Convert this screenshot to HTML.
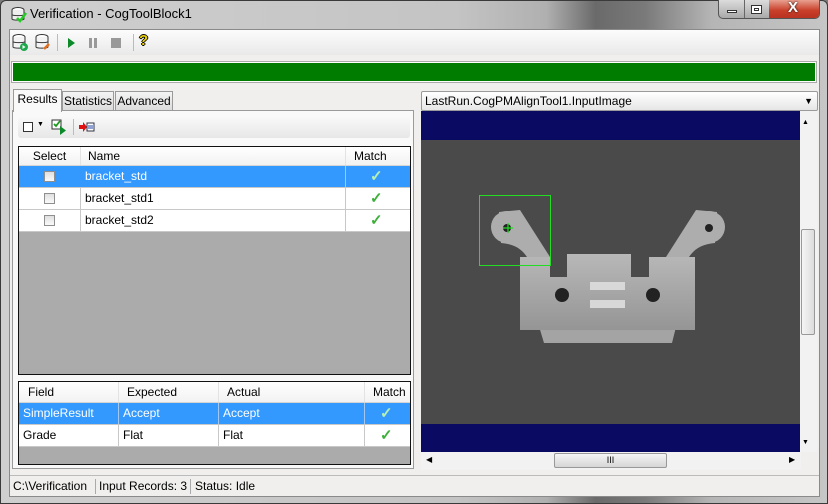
<!DOCTYPE html>
<html><head><meta charset="utf-8"><style>
*{margin:0;padding:0;box-sizing:border-box}
body{width:828px;height:504px;overflow:hidden;position:relative;font-family:"Liberation Sans",sans-serif;font-size:12px;color:#000;background:#7a7a7a}
.a{position:absolute}
.frame{left:0;top:0;width:828px;height:504px;background:linear-gradient(90deg,#cfcfcf 0%,#c4c4c4 55%,#b0b0b0 66%,#6a6a6a 72%,#7a7a7a 78%,#b5b5b5 86%,#c6c6c6 100%);border:1px solid #3a3a3a;border-radius:6px 6px 0 0}
.client{left:9px;top:29px;width:811px;height:468px;background:#f0efee;border:1px solid #8a8a8a}
.grid{background:#ababab;border:1px solid #111}
.hdr{background:linear-gradient(#fff,#f2f2f2);border-bottom:1px solid #d5d5d5;height:19px}
.cell{position:absolute;top:0;height:100%;border-right:1px solid #c8c8c8;padding-left:4px;line-height:21px;white-space:nowrap}
.row{position:absolute;left:0;right:0;height:22px;background:#fff;border-bottom:1px solid #c8c8c8}
.sel{background:#3399ff;color:#fff}
.cb{position:absolute;width:11px;height:11px;border:1px solid #8f8f8f;background:linear-gradient(#e0e0e0,#fafafa);top:5px}
.ck{color:#3cb039;font-weight:bold;font-size:15px;position:absolute;top:1px}
.tab{top:91px;height:20px;border:1px solid #9a9a9a;background:linear-gradient(#f4f4f4,#dcdcdc);line-height:18px;text-align:center}
</style></head><body>
<div class="a frame"></div>
<!-- title -->
<svg class="a" style="left:10px;top:6px" width="18" height="18"><ellipse cx="8" cy="4" rx="6" ry="2.5" fill="#fff" stroke="#333"/><path d="M2 4v9c0 1.5 12 1.5 12 0V4" fill="#eee" stroke="#333"/><path d="M2 8.5c0 1.5 12 1.5 12 0" fill="none" stroke="#333"/><path d="M7 12l3 3 6-8" stroke="#2c2" stroke-width="2.5" fill="none"/></svg>
<div class="a" style="left:30px;top:6px;font-size:13px;color:#000">Verification - CogToolBlock1</div>
<div class="a" style="left:718px;top:0;width:102px;height:19px;border:1px solid #555;border-top:none;border-radius:0 0 5px 5px;overflow:hidden;background:linear-gradient(#dcdcdc,#a9a9a9)">
 <div class="a" style="left:25px;top:0;width:1px;height:19px;background:#666"></div>
 <div class="a" style="left:50px;top:0;width:52px;height:19px;background:linear-gradient(#e8a090,#c8402a 55%,#b8301f)"></div>
 <div class="a" style="left:8px;top:10px;width:10px;height:3px;background:#fff;border:1px solid #333"></div>
 <div class="a" style="left:32px;top:5px;width:11px;height:9px;border:1px solid #333;background:#fff"><div style="margin:2px;height:3px;border:1px solid #333"></div></div>
 <div class="a" style="left:69px;top:-1px;color:#fff;font-weight:bold;font-size:15px;text-shadow:0 0 2px #000">X</div>
</div>
<div class="a client"></div>
<!-- toolbar -->
<div class="a" style="left:10px;top:30px;width:809px;height:25px;background:linear-gradient(#fcfcfc,#e9e9e9)"></div>
<svg class="a" style="left:12px;top:34px" width="60" height="18">
 <ellipse cx="7" cy="3" rx="6" ry="2.5" fill="#fff" stroke="#333"/><path d="M1 3v10c0 1.5 12 1.5 12 0V3" fill="#f3f3f3" stroke="#333"/><path d="M1 7.5c0 1.5 12 1.5 12 0" fill="none" stroke="#333"/><circle cx="12" cy="13" r="4" fill="#1da84a"/><path d="M10.5 11v4l3-2z" fill="#fff"/>
 <g transform="translate(23,0)"><ellipse cx="7" cy="3" rx="6" ry="2.5" fill="#fff" stroke="#333"/><path d="M1 3v10c0 1.5 12 1.5 12 0V3" fill="#f3f3f3" stroke="#333"/><path d="M1 7.5c0 1.5 12 1.5 12 0" fill="none" stroke="#333"/><path d="M9 15l5-5" stroke="#e07020" stroke-width="2.5"/></g>
</svg>
<div class="a" style="left:57px;top:34px;width:1px;height:17px;background:#bbb"></div>
<svg class="a" style="left:66px;top:37px" width="60" height="12"><path d="M2 1v10l7-5z" fill="#0c8a2a"/><rect x="23" y="1" width="3" height="10" fill="#999"/><rect x="28" y="1" width="3" height="10" fill="#999"/><rect x="45" y="1" width="10" height="10" fill="#999"/></svg>
<div class="a" style="left:133px;top:34px;width:1px;height:17px;background:#bbb"></div>
<div class="a" style="left:139px;top:32px;font-weight:bold;font-size:15px;color:#e8d000;text-shadow:1px 0 #000,-1px 0 #000,0 1px #000,0 -1px #000">?</div>
<!-- progress -->
<div class="a" style="left:11px;top:61px;width:806px;height:22px;border:1px solid #aaa;background:#fff;padding:1px"><div style="width:100%;height:100%;background:#007c00"></div></div>
<!-- tabs -->
<div class="a" style="left:12px;top:110px;width:402px;height:359px;border:1px solid #9a9a9a;background:#f9f9f9"></div>
<div class="a tab" style="left:62px;width:52px">Statistics</div>
<div class="a tab" style="left:115px;width:58px">Advanced</div>
<div class="a tab" style="left:13px;top:89px;width:49px;height:23px;background:#f9f9f9;border-bottom:none">Results</div>
<!-- mini toolbar -->
<div class="a" style="left:18px;top:115px;width:392px;height:23px;background:linear-gradient(#fafafa,#e7e7e7);border-radius:3px"></div>
<div class="a" style="left:23px;top:122px;width:10px;height:10px;border:1px solid #333;background:#fff"></div>
<div class="a" style="left:37px;top:121px;font-size:7px">▼</div>
<svg class="a" style="left:51px;top:119px" width="18" height="17"><rect x="1" y="1" width="9" height="9" fill="#fff" stroke="#333"/><path d="M3 5l2 2 4-5" stroke="#1a9a1a" stroke-width="1.8" fill="none"/><path d="M9 7v9l6-4.5z" fill="#0c8a2a"/></svg>
<div class="a" style="left:73px;top:119px;width:1px;height:16px;background:#bbb"></div>
<svg class="a" style="left:79px;top:122px" width="16" height="10"><path d="M0 3h4V0l4 5-4 5V7H0z" fill="#e01010"/><rect x="8" y="1" width="7" height="8" fill="#fff" stroke="#334"/><path d="M9 4h5M9 6h5" stroke="#2244aa"/></svg>
<!-- grid 1 -->
<div class="a grid" style="left:18px;top:146px;width:393px;height:229px">
 <div class="a hdr" style="left:0;top:0;width:391px">
  <div class="cell" style="left:0;width:62px;line-height:19px;text-align:center;padding:0;border-color:#e3e3e3">Select</div>
  <div class="cell" style="left:62px;width:265px;line-height:19px;padding-left:7px;border-color:#e3e3e3">Name</div>
  <div class="cell" style="left:327px;width:64px;line-height:19px;padding-left:8px;border:none">Match</div>
 </div>
 <div class="row sel" style="top:19px"><div class="cb" style="left:25px"></div><div class="cell" style="left:62px;width:265px;border-color:#a0c8f0">bracket_std</div><div class="ck" style="left:351px;color:#b8f0b0">✓</div></div>
 <div class="row" style="top:41px"><div class="cb" style="left:25px"></div><div class="cell" style="left:62px;width:265px">bracket_std1</div><div class="cell" style="left:0;width:62px;"></div><div class="ck" style="left:351px">✓</div></div>
 <div class="row" style="top:63px"><div class="cb" style="left:25px"></div><div class="cell" style="left:62px;width:265px">bracket_std2</div><div class="cell" style="left:0;width:62px;"></div><div class="ck" style="left:351px">✓</div></div>
</div>
<!-- grid 2 -->
<div class="a grid" style="left:18px;top:381px;width:393px;height:84px">
 <div class="a hdr" style="left:0;top:0;width:391px;height:21px">
  <div class="cell" style="left:0;width:100px;padding-left:9px;border-color:#e3e3e3">Field</div>
  <div class="cell" style="left:100px;width:100px;padding-left:8px;border-color:#e3e3e3">Expected</div>
  <div class="cell" style="left:200px;width:146px;padding-left:8px;border-color:#e3e3e3">Actual</div>
  <div class="cell" style="left:346px;width:45px;padding-left:8px;border:none">Match</div>
 </div>
 <div class="row sel" style="top:21px"><div class="cell" style="left:0;width:100px;border-color:#a0c8f0">SimpleResult</div><div class="cell" style="left:100px;width:100px;border-color:#a0c8f0">Accept</div><div class="cell" style="left:200px;width:146px;border-color:#a0c8f0">Accept</div><div class="ck" style="left:361px;color:#b8f0b0">✓</div></div>
 <div class="row" style="top:43px"><div class="cell" style="left:0;width:100px">Grade</div><div class="cell" style="left:100px;width:100px">Flat</div><div class="cell" style="left:200px;width:146px">Flat</div><div class="ck" style="left:361px">✓</div></div>
</div>
<!-- right pane -->
<div class="a" style="left:421px;top:91px;width:397px;height:20px;border:1px solid #9a9a9a;border-radius:2px;background:linear-gradient(#fff,#e6e6e6);padding-left:3px;line-height:18px">LastRun.CogPMAlignTool1.InputImage<span style="position:absolute;right:4px;top:0;font-size:9px">▼</span></div>
<div class="a" style="left:421px;top:111px;width:380px;height:341px;background:#4a4a4a">
 <div class="a" style="left:0;top:0;width:380px;height:29px;background:#0a0a62"></div>
 <div class="a" style="left:0;top:313px;width:380px;height:28px;background:#0a0a62"></div>
 <svg class="a" style="left:0;top:29px" width="380" height="284">
  <defs><linearGradient id="g" x1="0" x2="0" y1="0" y2="1"><stop offset="0" stop-color="#b8b8b8"/><stop offset="1" stop-color="#959595"/></linearGradient></defs>
  <path d="M117 183h139l-5 20H123z" fill="#a4a4a4"/>
  <path d="M99 117h30v20h17v-23h64v23h18v-20h46v73H99z" fill="url(#g)"/>
  <circle cx="86" cy="87" r="16" fill="#adadad"/>
  <path d="M78 72L99 70L129 117H106C100 108 92 104 80 103z" fill="#adadad"/>
  <circle cx="288" cy="87" r="16" fill="#adadad"/>
  <path d="M296 72L275 70L245 117H268C274 108 282 104 294 103z" fill="#adadad"/>
  <circle cx="86" cy="88" r="4" fill="#222"/><circle cx="288" cy="88" r="4" fill="#222"/>
  <circle cx="141" cy="155" r="7" fill="#222"/><circle cx="232" cy="155" r="7" fill="#222"/>
  <rect x="169" y="142" width="35" height="8" fill="#d8d8d8"/><rect x="169" y="160" width="35" height="8" fill="#d8d8d8"/>
  <rect x="58.5" y="55.5" width="71" height="70" fill="none" stroke="#22dd22"/>
  <path d="M87 83v10M82 88h10" stroke="#22dd22" stroke-width="1.2"/>
 </svg>
</div>
<div class="a" style="left:800px;top:111px;width:17px;height:341px;background:#f2f2f2"><div class="a" style="left:2px;top:8px;font-size:7px">▲</div><div class="a" style="left:2px;top:328px;font-size:7px">▼</div><div class="a" style="left:1px;top:118px;width:14px;height:106px;border:1px solid #999;border-radius:2px;background:linear-gradient(90deg,#f5f5f5,#dcdcdc)"></div></div>
<div class="a" style="left:421px;top:452px;width:380px;height:18px;background:#f2f2f2"><div class="a" style="left:5px;top:3px;font-size:8px">◀</div><div class="a" style="left:368px;top:3px;font-size:8px">▶</div><div class="a" style="left:133px;top:1px;width:113px;height:15px;border:1px solid #999;border-radius:2px;background:linear-gradient(#f5f5f5,#d6d6d6);text-align:center;font-size:9px;line-height:12px">III</div></div>
<!-- status -->
<div class="a" style="left:10px;top:475px;width:809px;height:21px;border-top:1px solid #bbb;background:#f0efee;font-size:12px;line-height:21px">
 <span class="a" style="left:3px">C:\Verification</span>
 <span class="a" style="left:85px;top:3px;width:1px;height:15px;background:#aaa"></span>
 <span class="a" style="left:89px">Input Records: 3</span>
 <span class="a" style="left:180px;top:3px;width:1px;height:15px;background:#aaa"></span>
 <span class="a" style="left:185px">Status: Idle</span>
</div>
</body></html>
